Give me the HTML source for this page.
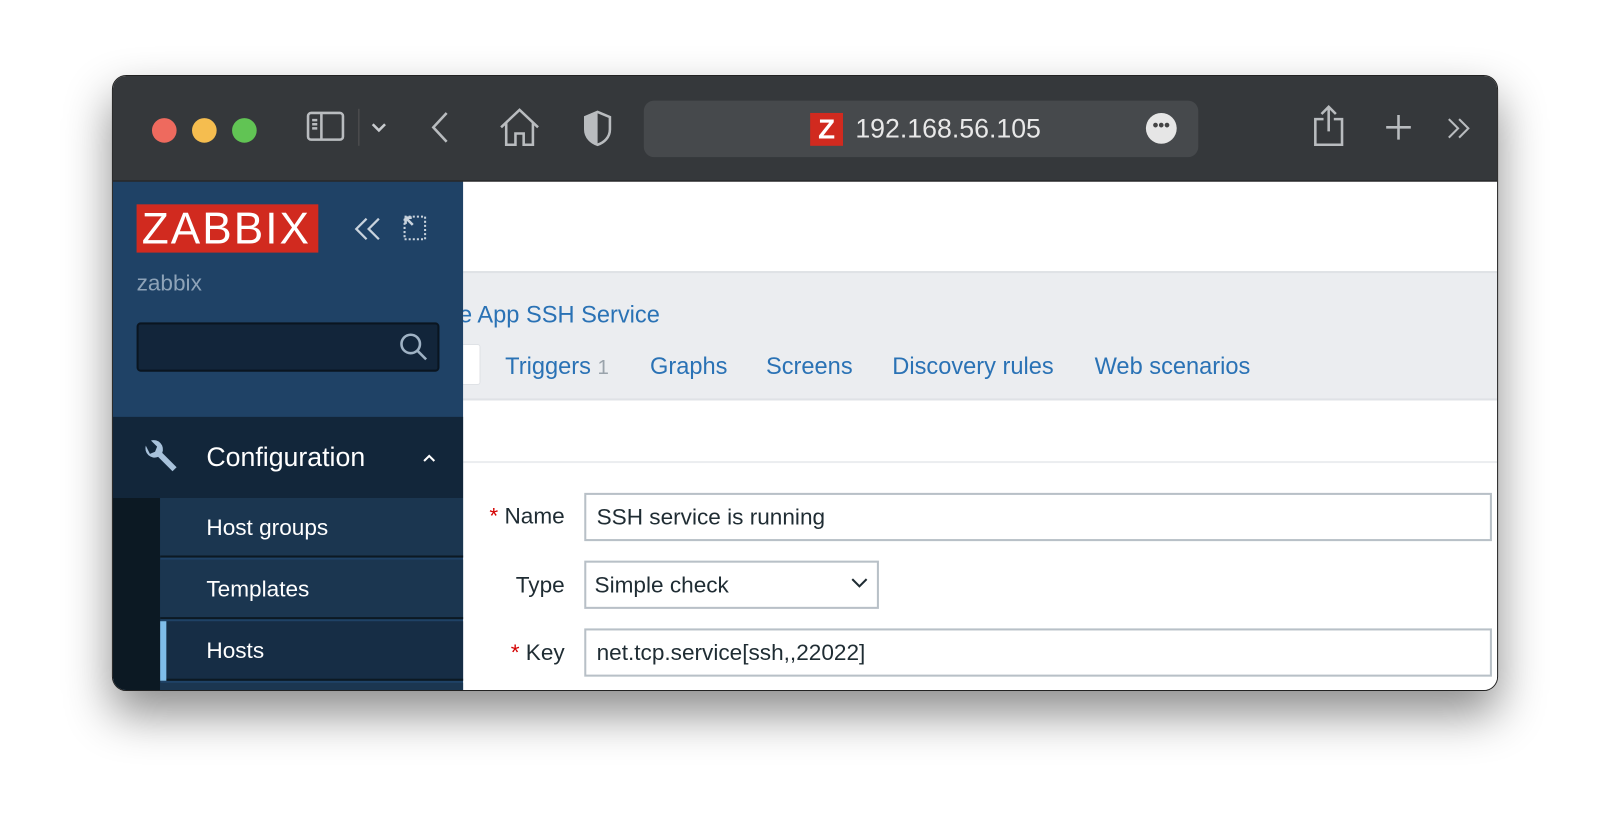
<!DOCTYPE html>
<html><head><meta charset="utf-8"><style>
*{margin:0;padding:0;box-sizing:border-box}
html,body{width:1608px;height:838px;overflow:hidden;background:#fff}
#s{position:absolute;left:0;top:0;width:1566px;height:816px;transform:scale(1.0268);transform-origin:0 0;font-family:"Liberation Sans",sans-serif}
.win{position:absolute;left:109px;top:73px;width:1350px;height:600px;border-radius:14px;overflow:hidden;background:#fff;box-shadow:0 22px 45px rgba(0,0,0,.45);border:1px solid #222}
.tb{position:absolute;left:0;top:0;width:100%;height:103px;background:#35383b;border-bottom:1px solid #111}
.dot{position:absolute;top:41px;width:24px;height:24px;border-radius:50%}
.a{position:absolute}
.side{position:absolute;left:0;top:103px;width:341px;height:500px;background:#1f4266;z-index:2}
.cnt{position:absolute;left:341px;top:103px;right:0;bottom:0;background:#fff;overflow:hidden}
.lnk{position:absolute;color:#2a72b5;font-size:23px;top:166px}
.item{position:absolute;left:46px;width:295px;height:58px;background:#1b3650;color:#fff;font-size:22px;padding:16px 0 0 45px}
.inp{position:absolute;border:2px solid #b8c0c7;background:#fff;font-size:22px;color:#1f2c33;padding:9px 10px}
.lab{position:absolute;font-size:22px;color:#1f2c33;text-align:right;width:120px}
.req{color:#d40000}
</style></head><body><div id="s">
<div class="win">
 <div class="tb">
  <div class="dot" style="left:38px;background:#ee6a5e"></div>
  <div class="dot" style="left:77px;background:#f5bd4f"></div>
  <div class="dot" style="left:116px;background:#61c454"></div>
  <svg class="a" style="left:188px;top:34px" width="40" height="32" viewBox="0 0 40 32" fill="none" stroke="#b9bcbf" stroke-width="2.5"><rect x="2" y="2" width="34" height="26" rx="3"/><line x1="15" y1="2" x2="15" y2="28"/><line x1="6" y1="9" x2="11" y2="9"/><line x1="6" y1="13" x2="11" y2="13"/><line x1="6" y1="17" x2="11" y2="17"/></svg>
  <div class="a" style="left:239px;top:32px;width:1px;height:36px;background:#555"></div>
  <svg class="a" style="left:251px;top:44px" width="16" height="12" viewBox="0 0 16 12" fill="none" stroke="#c9cccf" stroke-width="2.5"><path d="M2 3l6 6 6-6"/></svg>
  <svg class="a" style="left:308px;top:34px" width="22" height="32" viewBox="0 0 22 32" fill="none" stroke="#b9bcbf" stroke-width="2.5"><path d="M17 2L4 16l13 14"/></svg>
  <svg class="a" style="left:375px;top:30px" width="42" height="40" viewBox="0 0 42 40" fill="none" stroke="#b9bcbf" stroke-width="2.5"><path d="M3 20L21 3l18 17M8 16v21h9V26h8v11h9V16"/></svg>
  <svg class="a" style="left:457px;top:33px" width="30" height="36" viewBox="0 0 30 36"><path d="M15 2l12 5v12c0 8-6 13-12 15C9 32 3 27 3 19V7z" fill="none" stroke="#b9bcbf" stroke-width="2.5"/><path d="M15 2v32C9 32 3 27 3 19V7z" fill="#b9bcbf"/></svg>
  <div class="a" style="left:517px;top:24px;width:540px;height:55px;border-radius:10px;background:#46494c"></div>
  <div class="a" style="left:679px;top:36px;width:32px;height:32px;background:#d12a1f;color:#fff;font-weight:bold;font-size:27px;text-align:center;line-height:32px">Z</div>
  <div class="a" style="left:723px;top:36px;color:#e8e8e8;font-size:26px">192.168.56.105</div>
  <div class="a" style="left:1006px;top:36px;width:30px;height:30px;border-radius:50%;background:#e6e6e6;color:#444;font-size:16px;text-align:center;line-height:26px;font-weight:bold">•••</div>
  <svg class="a" style="left:1168px;top:28px" width="32" height="42" viewBox="0 0 32 42" fill="none" stroke="#b9bcbf" stroke-width="2.5"><path d="M11 14H3v25h26V14h-8M16 2v24M9 9l7-7 7 7"/></svg>
  <svg class="a" style="left:1238px;top:36px" width="28" height="28" fill="none" stroke="#b9bcbf" stroke-width="2.5"><path d="M14 2v24M2 14h24"/></svg>
  <svg class="a" style="left:1298px;top:39px" width="26" height="24" fill="none" stroke="#b9bcbf" stroke-width="2"><path d="M3 3l9 9-9 9M13 3l9 9-9 9"/></svg>
 </div>
 <div class="side">
  <div class="a" style="left:23px;top:22px;width:177px;height:47px;background:#d12a1f;color:#fff;font-size:43px;line-height:48px;padding-left:5px;letter-spacing:2px">ZABBIX</div>
  <svg class="a" style="left:233px;top:33px" width="30" height="26" fill="none" stroke="#c9d3dd" stroke-width="2.2"><path d="M14 3L4 13l10 10M26 3L16 13l10 10"/></svg>
  <svg class="a" style="left:281px;top:31px" width="26" height="28" fill="none" stroke="#c9d3dd" stroke-width="2"><path d="M3 3h20v22H3z" stroke-dasharray="2 2"/><path d="M4 4l7 7M4 4h6M4 4v6" stroke-width="2.5" stroke-dasharray="none"/></svg>
  <div class="a" style="left:23px;top:86px;color:#8ea3b8;font-size:22px">zabbix</div>
  <div class="a" style="left:23px;top:137px;width:295px;height:48px;background:#12253a;border:2px solid #0a1520;border-radius:4px"></div>
  <svg class="a" style="left:278px;top:146px" width="30" height="30" fill="none" stroke="#9fb2c4" stroke-width="2.5"><circle cx="12" cy="12" r="9"/><path d="M19 19l8 8"/></svg>
  <div class="a" style="left:0;top:229px;width:341px;height:79px;background:#12263a"></div>
  <svg class="a" style="left:27px;top:249px" width="38" height="38" viewBox="0 0 38 38"><path d="M5 8a9 9 0 0 0 12 11l14 14 4-4-14-14A9 9 0 0 0 10 3l6 6-2 5-5 2z" fill="#a8c2db"/></svg>
  <div class="a" style="left:91px;top:253px;color:#fff;font-size:26px">Configuration</div>
  <svg class="a" style="left:301px;top:264px" width="14" height="10" fill="none" stroke="#fff" stroke-width="2"><path d="M2 8l5-5 5 5"/></svg>
  <div class="a" style="left:0;top:308px;width:46px;height:200px;background:#0c1923"></div>
  <div class="item" style="top:308px;border-bottom:2px solid #0c1923">Host groups</div>
  <div class="item" style="top:368px;border-bottom:2px solid #0c1923">Templates</div>
  <div class="item" style="top:428px;background:#162d45;border-bottom:2px solid #0c1923">Hosts</div>
  <div class="a" style="left:46px;top:428px;width:6px;height:58px;background:#7fbde9"></div>
  <div class="a" style="left:46px;top:488px;width:295px;height:20px;background:#1b3650"></div>
 </div>
 <div class="cnt">
  <div class="a" style="left:0;top:87px;right:0;height:126px;background:#ebedf0;border-top:2px solid #dfe2e6;border-bottom:2px solid #dfe2e6"></div>
  <div class="lnk" style="left:-4px;top:116px">e App SSH Service</div>
  <div class="a" style="left:-10px;top:158px;width:27px;height:40px;background:#fff;border:1px solid #dfe2e6;border-radius:3px"></div>
  <div class="lnk" style="left:41px">Triggers <span style="color:#9aa3ab;font-size:20px">1</span></div>
  <div class="lnk" style="left:182px">Graphs</div>
  <div class="lnk" style="left:295px">Screens</div>
  <div class="lnk" style="left:418px">Discovery rules</div>
  <div class="lnk" style="left:615px">Web scenarios</div>
  <div class="a" style="left:0;top:272px;right:0;height:2px;background:#ebedf0"></div>
  <div class="lab" style="left:-21px;top:313px"><span class="req">* </span>Name</div>
  <div class="inp" style="left:118px;top:303px;width:884px;height:47px">SSH service is running</div>
  <div class="lab" style="left:-21px;top:380px">Type</div>
  <div class="inp" style="left:118px;top:369px;width:287px;height:47px;padding-left:8px">Simple check</div>
  <svg class="a" style="left:377px;top:385px" width="18" height="12" fill="none" stroke="#1f2c33" stroke-width="2"><path d="M2 2l7 7 7-7"/></svg>
  <div class="lab" style="left:-21px;top:446px"><span class="req">* </span>Key</div>
  <div class="inp" style="left:118px;top:435px;width:884px;height:47px">net.tcp.service[ssh,,22022]</div>
 </div>
</div>
</div></body></html>
